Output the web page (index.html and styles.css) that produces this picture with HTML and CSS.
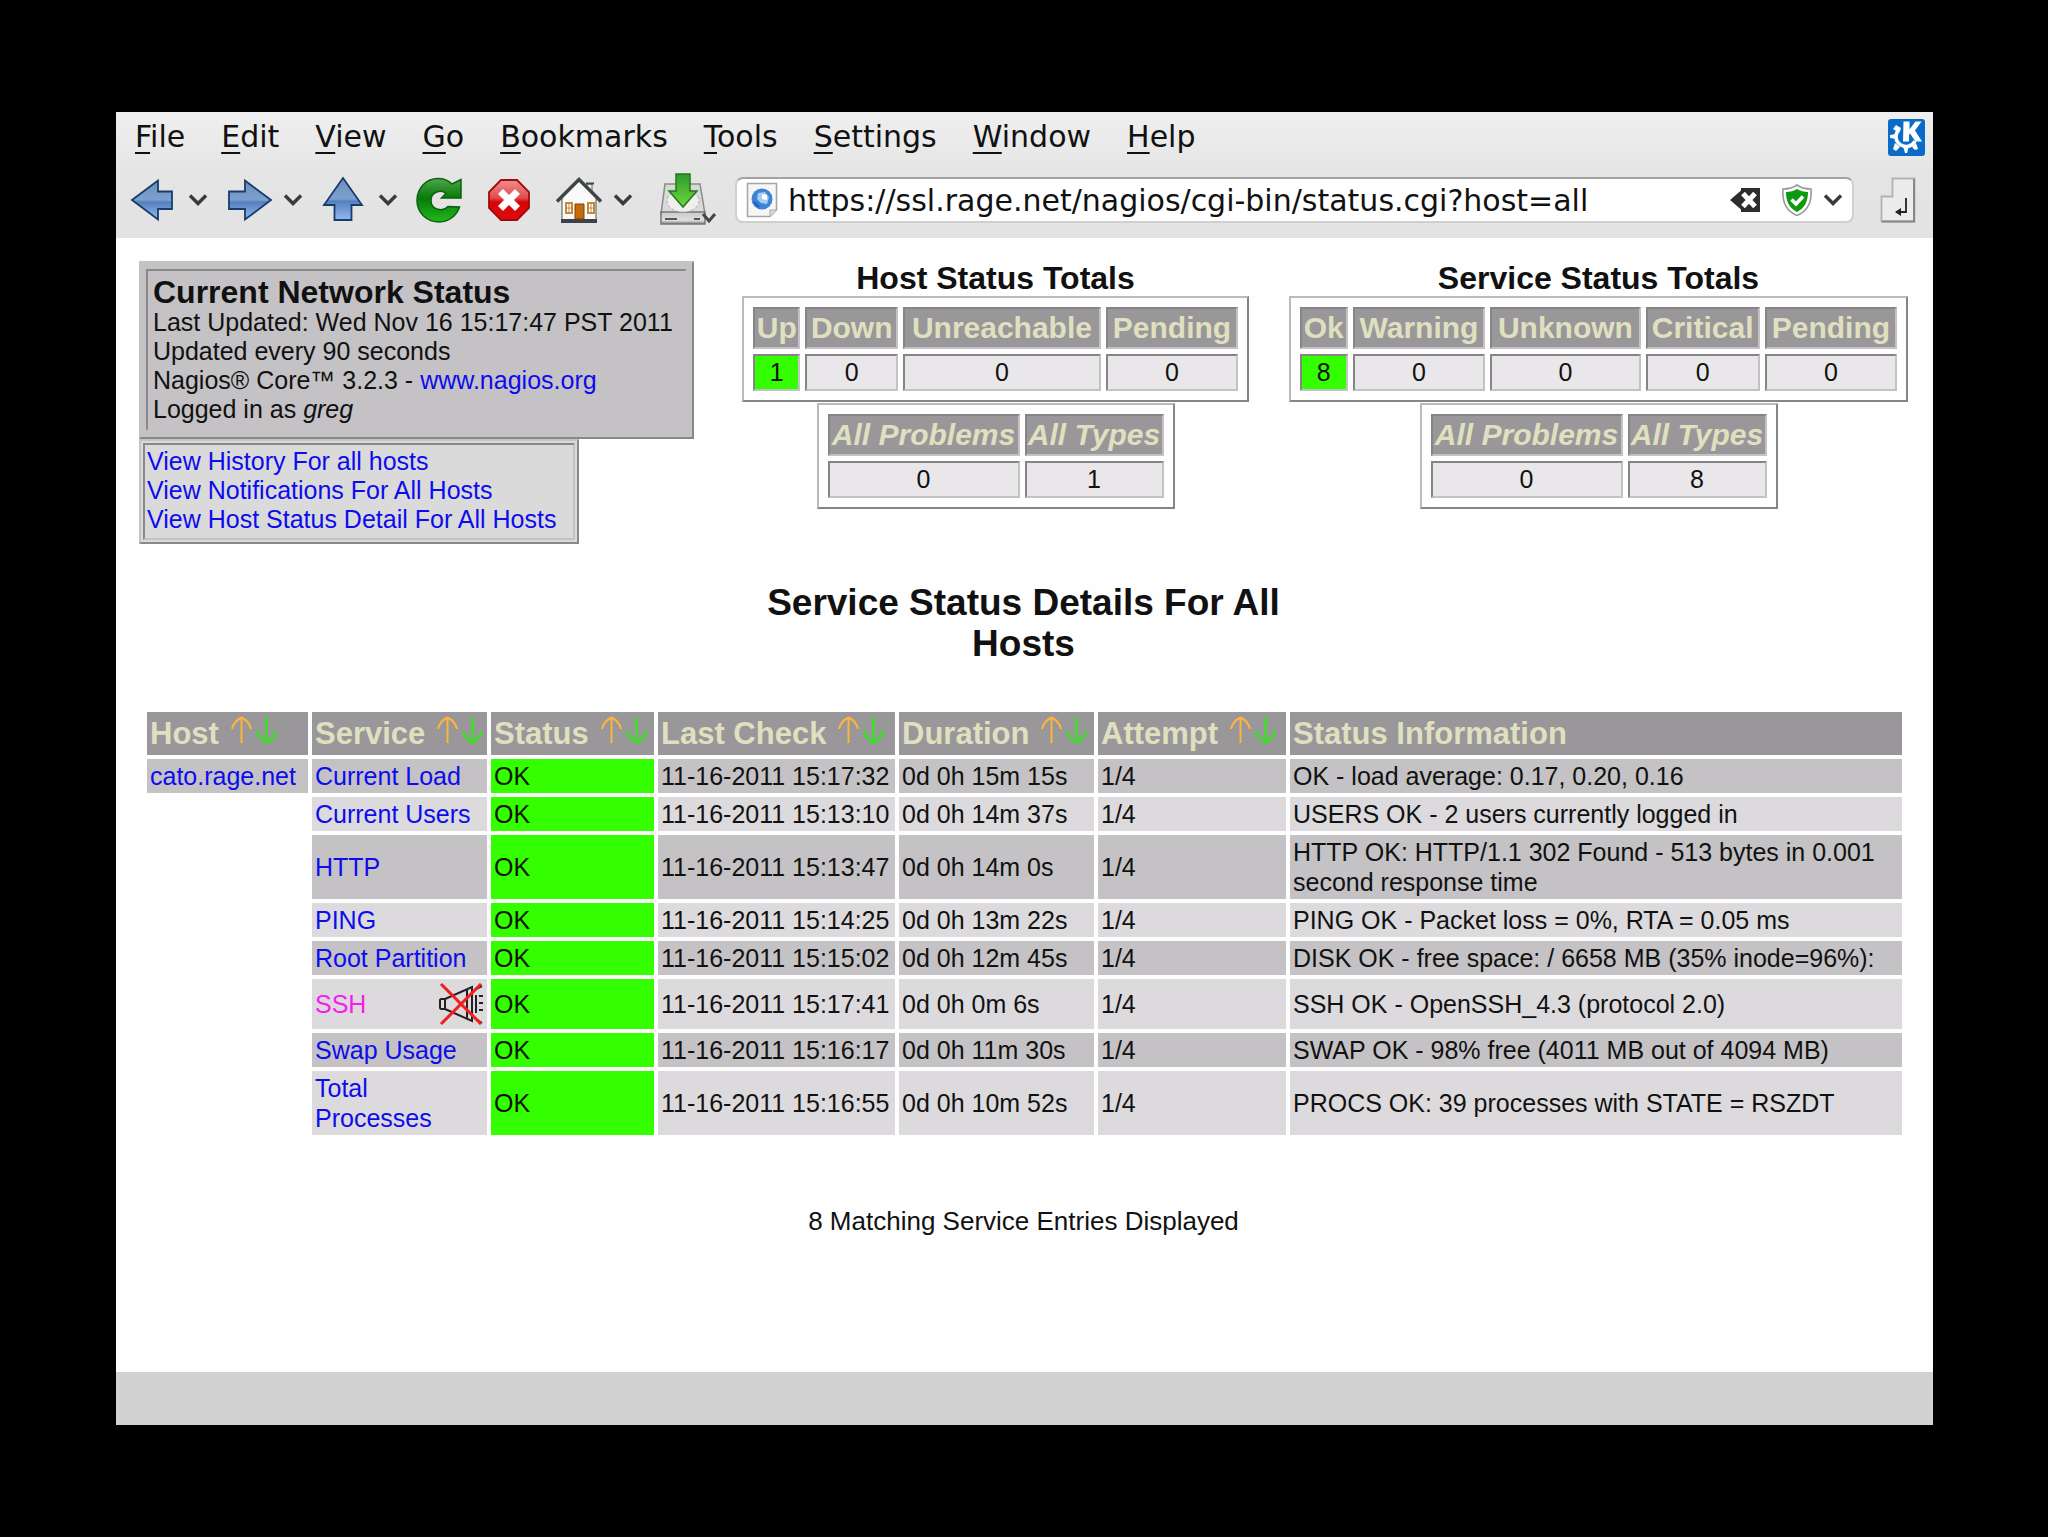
FILE: index.html
```html
<!DOCTYPE html>
<html lang="en">
<head>
<meta charset="utf-8">
<title>Current Network Status</title>
<link rel="stylesheet" href="styles.css">
</head>
<body>
<svg class="defs" width="0" height="0" aria-hidden="true">
  <defs>
    <linearGradient id="blue" x1="0" y1="0" x2="0" y2="1">
      <stop offset="0" stop-color="#6f8fb8"/><stop offset=".5" stop-color="#7ba0d0"/><stop offset=".55" stop-color="#5580be"/><stop offset="1" stop-color="#93b8f0"/>
    </linearGradient>
    <linearGradient id="green" x1="0" y1="0" x2="0" y2="1">
      <stop offset="0" stop-color="#4fa54c"/><stop offset=".45" stop-color="#087a0a"/><stop offset="1" stop-color="#22b81c"/>
    </linearGradient>
    <linearGradient id="red" x1="0" y1="0" x2="0" y2="1">
      <stop offset="0" stop-color="#ef8f90"/><stop offset=".45" stop-color="#e24a4c"/><stop offset=".55" stop-color="#d40608"/><stop offset="1" stop-color="#e00a0a"/>
    </linearGradient>
    <linearGradient id="lime" x1="0" y1="0" x2="0" y2="1">
      <stop offset="0" stop-color="#2f9a2c"/><stop offset="1" stop-color="#6fd83c"/>
    </linearGradient>
    <linearGradient id="metal" x1="0" y1="0" x2="0" y2="1">
      <stop offset="0" stop-color="#c9c9c9"/><stop offset=".7" stop-color="#dedede"/><stop offset="1" stop-color="#7c7c7c"/>
    </linearGradient>
    <symbol id="chevron" viewBox="0 0 20 14"><path d="M2 2.500 10 10.500 18 2.500" fill="none" stroke="#3a3a3a" stroke-width="3.400"/></symbol>
    <symbol id="sort" viewBox="0 0 46 28">
      <path d="M10.500 27V2M1 13Q3 5 10.500 1.500 18 5 20 13" fill="none" stroke="#ffb43c" stroke-width="2"/>
      <path d="M35.500 1v25M26 15q2 8 9.500 11.500Q43 23 45 15" fill="none" stroke="#33e81a" stroke-width="2.400"/>
    </symbol>
  </defs>
</svg>
<div class="window">
  <header class="chrome">
    <nav class="menubar" aria-label="Menu">
      <button type="button"><u>F</u>ile</button>
      <button type="button"><u>E</u>dit</button>
      <button type="button"><u>V</u>iew</button>
      <button type="button"><u>G</u>o</button>
      <button type="button"><u>B</u>ookmarks</button>
      <button type="button"><u>T</u>ools</button>
      <button type="button"><u>S</u>ettings</button>
      <button type="button"><u>W</u>indow</button>
      <button type="button"><u>H</u>elp</button>
      <svg class="kde" viewBox="0 0 37 37" aria-hidden="true">
        <rect width="37" height="37" rx="3" fill="#0b6bc9"/>
        <path d="M11.500 10A10 10 0 1 0 27 22" fill="none" stroke="#fff" stroke-width="3.500"/>
        <path d="M5 10l3-4 5 3-2 5zM2 16l6-1v5l-6-1zM5 30l2-6 5 4-4 4zM15 27h6l-2 7h-2zM24 28l4-4 2 6-3 1z" fill="#fff"/>
        <path d="M15.500 2.500h6v8l6-8h6l-6.500 9 7 11h-6.500l-5.500-8-1 1.500v6.500h-6z" fill="#fff"/>
      </svg>
    </nav>
    <div class="toolbar">
      <button type="button" class="tool" aria-label="Back">
        <svg class="icon" viewBox="0 0 48 48"><path d="M2 24 28 4.500V15.500H42V33H28V43.500z" fill="url(#blue)" stroke="#173c6b" stroke-width="1.800"/></svg>
        <svg class="chevron"><use href="#chevron"/></svg>
      </button>
      <button type="button" class="tool" aria-label="Forward">
        <svg class="icon" viewBox="0 0 48 48"><path d="M46 24 20 4.500V15.500H4V33H20V43.500z" fill="url(#blue)" stroke="#173c6b" stroke-width="1.800"/></svg>
        <svg class="chevron"><use href="#chevron"/></svg>
      </button>
      <button type="button" class="tool" aria-label="Up">
        <svg class="icon" viewBox="0 0 48 48"><path d="M23 2 42 29H31.500V44H14.500V29H4z" fill="url(#blue)" stroke="#173c6b" stroke-width="1.800"/></svg>
        <svg class="chevron"><use href="#chevron"/></svg>
      </button>
      <button type="button" class="tool single" aria-label="Reload">
        <svg class="icon" viewBox="0 0 48 48"><path d="M37 8 46 3.500V22H26.500L31 17.500C27 13.500 15.500 15 16 25 16.500 34 28 36 33 30.500L44.500 31C42 39 34 46 24.500 46 12 46 2 37 2 24.500 2 11 12 2.500 23 2.500 29 2.500 34 5 37 8z" fill="url(#green)" stroke="#0b610c" stroke-width="1.500"/></svg>
      </button>
      <button type="button" class="tool single" aria-label="Stop">
        <svg class="icon" viewBox="0 0 48 48"><path d="M16 4H32L44 16V32L32 44H16L4 32V16z" fill="url(#red)" stroke="#9d0b0c" stroke-width="1.800"/><path d="M15.500 15.500 32.500 32.500M32.500 15.500 15.500 32.500" stroke="#fff" stroke-width="7"/></svg>
      </button>
      <button type="button" class="tool" aria-label="Home">
        <svg class="icon" viewBox="0 0 48 48"><path d="M32 8h5v10l-5-5z" fill="#eee" stroke="#666"/><path d="M31 7.500h8" stroke="#444" stroke-width="2"/><path d="M7 22 24 5 41 22V46H7z" fill="#fafafa" stroke="#555"/><path d="M6 43h36v4H6z" fill="#3c4247"/><path d="M2 25.500 24 3.500 46 25.500" fill="none" stroke="#3f4448" stroke-width="3.500"/><path d="M20 28h9v15h-9z" fill="#c66a0a" stroke="#7d4205"/><path d="M11 27h6v10h-6zM33 27h6v10h-6z" fill="#fff" stroke="#c08a3a" stroke-width="2"/><path d="M11 32h6M33 32h6M14 27v10M36 27v10" stroke="#c08a3a"/></svg>
        <svg class="chevron"><use href="#chevron"/></svg>
      </button>
      <button type="button" class="tool download" aria-label="Download">
        <svg class="icon-wide" viewBox="0 0 60 56"><path d="M7 12H42L47 42H3z" fill="#d9d9d9" stroke="#8a8a8a" stroke-width="1.500"/><path d="M3 40H47V52H3z" fill="url(#metal)" stroke="#777" stroke-width="1.500"/><ellipse cx="25" cy="29" rx="16" ry="11" fill="#efefef" stroke="#aaa" stroke-dasharray="3 2"/><path d="M7 47h12M36 47h6" stroke="#555" stroke-width="2"/><path d="M18 2H32V19H39L25 35 11 19H18z" fill="url(#lime)" stroke="#227a1d" stroke-width="1.500"/><path d="M45 42l6 7 6-7" fill="none" stroke="#444" stroke-width="3"/></svg>
      </button>
      <div class="location">
        <svg class="favicon" viewBox="0 0 32 36"><path d="M1.500 1.500H30.500V28L24 34.500H1.500z" fill="#f6f6f6" stroke="#a5a5a5" stroke-width="1.500"/><path d="M24 34.500V28h6.500" fill="#ddd" stroke="#a5a5a5"/><circle cx="16" cy="17" r="10.500" fill="#3f83d6"/><path d="M12 11l7-1 4 5-2 7-6-1-4-4z" fill="#a6cdf5"/><path d="M16 12l5 1v5l-5-1z" fill="#fff"/><path d="M8 20l5 5" stroke="#205fae" stroke-width="2"/></svg>
        <input type="text" aria-label="Location" value="https://ssl.rage.net/nagios/cgi-bin/status.cgi?host=all">
        <svg class="clear" viewBox="0 0 32 26"><path d="M1 13 12 3.500V1H31V25H12V22.500z" fill="#2c2e30"/><path d="M14 6.500 26 19.500M26 6.500 14 19.500" stroke="#fff" stroke-width="5"/></svg>
        <svg class="shield" viewBox="0 0 32 32"><path d="M16 1C20 4 25 5 30 5 31 17 27 27 16 31.500 5 27 1 17 2 5 7 5 12 4 16 1z" fill="#fff" stroke="#999" stroke-width="1.600"/><path d="M16 5C19 7 23 8 27 8 27 17 24 24 16 28 8 24 5 17 5 8 9 8 13 7 16 5z" fill="#0c9a10"/><path d="M10.500 15.500 15 20 22 12.500" fill="none" stroke="#fff" stroke-width="3.600"/></svg>
        <svg class="chevron"><use href="#chevron"/></svg>
      </div>
      <button type="button" class="tool go" aria-label="Go to location">
        <svg viewBox="0 0 36 46"><path d="M12.500 1.500H34.500V44.500H1.500V19.500H12.500z" fill="#ececec" stroke="#b2b2b2" stroke-width="1.800"/><path d="M34 2V44.500H2" fill="none" stroke="#888" stroke-width="2"/><path d="M26 21V35H16" fill="none" stroke="#222" stroke-width="1.800"/><path d="M15 35l6-4v8z" fill="#222"/></svg>
      </button>
    </div>
  </header>

  <main class="page">
    <section class="overview">
      <div class="info">
        <div class="panel status-panel">
          <div class="panel-body">
            <h2>Current Network Status</h2>
            <p>Last Updated: Wed Nov 16 15:17:47 PST 2011</p>
            <p>Updated every 90 seconds</p>
            <p>Nagios® Core™ 3.2.3 - <a href="#nagios">www.nagios.org</a></p>
            <p>Logged in as <i>greg</i></p>
          </div>
        </div>
        <div class="panel links-panel">
          <div class="panel-body">
            <a href="#history">View History For all hosts</a>
            <a href="#notifications">View Notifications For All Hosts</a>
            <a href="#hosts">View Host Status Detail For All Hosts</a>
          </div>
        </div>
      </div>

      <div class="totals">
        <h2>Host Status Totals</h2>
        <table class="count host-count">
          <tr><th>Up</th><th>Down</th><th>Unreachable</th><th>Pending</th></tr>
          <tr><td class="ok">1</td><td>0</td><td>0</td><td>0</td></tr>
        </table>
        <table class="count sum-count">
          <tr><th>All Problems</th><th>All Types</th></tr>
          <tr><td>0</td><td>1</td></tr>
        </table>
      </div>

      <div class="totals">
        <h2>Service Status Totals</h2>
        <table class="count service-count">
          <tr><th>Ok</th><th>Warning</th><th>Unknown</th><th>Critical</th><th>Pending</th></tr>
          <tr><td class="ok">8</td><td>0</td><td>0</td><td>0</td><td>0</td></tr>
        </table>
        <table class="count sum-count">
          <tr><th>All Problems</th><th>All Types</th></tr>
          <tr><td>0</td><td>8</td></tr>
        </table>
      </div>
    </section>

    <h1>Service Status Details For All Hosts</h1>

    <table class="details">
      <colgroup><col class="c-host"><col class="c-service"><col class="c-status"><col class="c-check"><col class="c-duration"><col class="c-attempt"><col></colgroup>
      <thead>
        <tr>
          <th>Host<svg class="sort"><use href="#sort"/></svg></th>
          <th>Service<svg class="sort"><use href="#sort"/></svg></th>
          <th>Status<svg class="sort"><use href="#sort"/></svg></th>
          <th>Last Check<svg class="sort"><use href="#sort"/></svg></th>
          <th>Duration<svg class="sort"><use href="#sort"/></svg></th>
          <th>Attempt<svg class="sort"><use href="#sort"/></svg></th>
          <th>Status Information</th>
        </tr>
      </thead>
      <tbody>
        <tr><td><a href="#cato">cato.rage.net</a></td><td><a href="#load">Current Load</a></td><td class="ok">OK</td><td>11-16-2011 15:17:32</td><td>0d 0h 15m 15s</td><td>1/4</td><td>OK - load average: 0.17, 0.20, 0.16</td></tr>
        <tr><td class="blank"></td><td><a href="#users">Current Users</a></td><td class="ok">OK</td><td>11-16-2011 15:13:10</td><td>0d 0h 14m 37s</td><td>1/4</td><td>USERS OK - 2 users currently logged in</td></tr>
        <tr><td class="blank"></td><td><a href="#http">HTTP</a></td><td class="ok">OK</td><td>11-16-2011 15:13:47</td><td>0d 0h 14m 0s</td><td>1/4</td><td>HTTP OK: HTTP/1.1 302 Found - 513 bytes in 0.001 second response time</td></tr>
        <tr><td class="blank"></td><td><a href="#ping">PING</a></td><td class="ok">OK</td><td>11-16-2011 15:14:25</td><td>0d 0h 13m 22s</td><td>1/4</td><td>PING OK - Packet loss = 0%, RTA = 0.05 ms</td></tr>
        <tr><td class="blank"></td><td><a href="#root">Root Partition</a></td><td class="ok">OK</td><td>11-16-2011 15:15:02</td><td>0d 0h 12m 45s</td><td>1/4</td><td>DISK OK - free space: / 6658 MB (35% inode=96%):</td></tr>
        <tr><td class="blank"></td><td><div class="muted"><a class="visited" href="#ssh">SSH</a><svg viewBox="0 0 46 42" aria-label="Notifications disabled"><path d="M3 16h4v10H3a1.500 1.500 0 0 1-1-1v-8zM7 16 34 4V38L7 26M29 7v28M38 12v18" fill="none" stroke="#222" stroke-width="2"/><path d="M38 6l6-3M41 13h4M41 20h4M41 27h4M38 36l6 4" stroke="#222" stroke-width="2"/><path d="M3 1 43 41M43 1 3 41" stroke="#f51d1d" stroke-width="3"/></svg></div></td><td class="ok">OK</td><td>11-16-2011 15:17:41</td><td>0d 0h 0m 6s</td><td>1/4</td><td>SSH OK - OpenSSH_4.3 (protocol 2.0)</td></tr>
        <tr><td class="blank"></td><td><a href="#swap">Swap Usage</a></td><td class="ok">OK</td><td>11-16-2011 15:16:17</td><td>0d 0h 11m 30s</td><td>1/4</td><td>SWAP OK - 98% free (4011 MB out of 4094 MB)</td></tr>
        <tr><td class="blank"></td><td><a href="#procs">Total Processes</a></td><td class="ok">OK</td><td>11-16-2011 15:16:55</td><td>0d 0h 10m 52s</td><td>1/4</td><td>PROCS OK: 39 processes with STATE = RSZDT</td></tr>
      </tbody>
    </table>

    <p class="matches">8 Matching Service Entries Displayed</p>
  </main>
  <footer class="statusbar"></footer>
</div>
</body>
</html>
```
FILE: styles.css
```css
* { box-sizing: border-box; }

body {
  margin: 0;
  min-height: 100vh;
  padding: 112px 115px 112px 116px;
  display: flex;
  flex-direction: column;
  background: #000;
  color: #111;
  font: 25px/30px "Liberation Sans", Arial, sans-serif;
}

h1, h2, p { margin: 0; }
a { color: #0c0cec; text-decoration: none; }
button { border: 0; padding: 0; background: none; color: inherit; font: inherit; }
svg { display: block; flex: none; }
.defs { position: absolute; }

.window {
  flex: 1;
  display: flex;
  flex-direction: column;
  background: #fefefe;
}

/* Browser chrome */
.chrome {
  background: linear-gradient(#efefef, #e5e5e5 50%, #e4e2e2);
  font-family: "DejaVu Sans", sans-serif;
  font-size: 30px;
}

.menubar {
  display: flex;
  align-items: center;
  gap: 36px;
  height: 50px;
  padding: 0 8px 0 19px;
}
.menubar u {
  text-decoration-thickness: 2px;
  text-underline-offset: 5px;
  text-decoration-skip-ink: none;
}
.kde { width: 37px; height: 37px; margin-left: auto; }

.toolbar {
  display: flex;
  align-items: center;
  gap: 17px;
  height: 76px;
  padding: 0 17px 0 14px;
}
.tool { display: flex; align-items: center; gap: 10px; }
.single { margin-right: 5px; }
.download { margin-left: 8px; }
.icon { width: 48px; height: 48px; }
.icon-wide { width: 60px; height: 56px; }
.chevron { width: 20px; height: 14px; }
.go svg { width: 36px; height: 46px; }

.location {
  flex: 1;
  display: flex;
  align-items: center;
  gap: 10px;
  height: 46px;
  margin-right: 9px;
  padding: 0 9px;
  background: #fff;
  border: 2px solid #cfcfcf;
  border-top-color: #a3a3a3;
  border-radius: 8px;
}
.location input {
  flex: 1;
  min-width: 0;
  padding: 0;
  border: 0;
  outline: 0;
  background: none;
  color: #111;
  font: inherit;
}
.favicon { width: 32px; height: 36px; }
.clear { width: 32px; height: 26px; margin-right: 10px; }
.shield { width: 32px; height: 32px; }

/* Page */
.page { flex: 1; padding: 23px 25px 0 23px; }

.overview {
  display: flex;
  justify-content: space-between;
  align-items: flex-start;
}
h2 { font-size: 32px; line-height: 34px; }

.info {
  display: flex;
  flex-direction: column;
  align-items: flex-start;
  margin-right: 8px;
  line-height: 29px;
}
.panel { border: 2px solid; }
.panel-body { border: 2px solid; }
.status-panel {
  width: 555px;
  padding: 6px 5px;
  background: #c4c2c4;
  border-color: #c4c2c4 #8a888a #8a888a #c4c2c4;
}
.status-panel .panel-body {
  padding: 5px;
  border-color: #8a888a #c4c2c4 #c4c2c4 #8a888a;
}
.status-panel h2 { line-height: 32px; }
.links-panel {
  width: 440px;
  padding: 2px;
  background: #dbdadb;
  border-color: #c4c2c4 #8a888a #8a888a #c4c2c4;
}
.links-panel .panel-body {
  display: flex;
  flex-direction: column;
  padding: 2px 2px 4px;
  border-color: #8a888a #c4c2c4 #c4c2c4 #8a888a;
}
.links-panel a { white-space: nowrap; }

.totals { display: flex; flex-direction: column; align-items: center; gap: 1px; }

.count {
  padding: 4px;
  border: 2px solid;
  border-color: #bcbabc #868486 #868486 #bcbabc;
  border-spacing: 5px;
  text-align: center;
}
.count th, .count td { border: 2px solid; border-color: #868486 #c4c2c4 #c4c2c4 #868486; }
.count th { padding: 2px 0; background: #999799; color: #dfe0c0; font-size: 30px; line-height: 34px; }
.count td { padding: 2px 0; background: #e9e7e9; line-height: 29px; }
.host-count { width: 507px; }
.host-count th:nth-child(3) { width: 198px; }
.service-count { width: 619px; }
.sum-count { width: 358px; }
.sum-count th { font-style: italic; }
.sum-count th:first-child { width: 192px; }
.count .ok { background: #33ff00; }

h1 {
  max-width: 590px;
  margin: 38px auto 44px;
  font-size: 37px;
  line-height: 41px;
  text-align: center;
}

.details {
  width: calc(100% - 6px);
  margin-left: 4px;
  border-spacing: 4px;
  table-layout: fixed;
}
.details th, .details td { padding: 2px 3px; text-align: left; background: #c4c2c4; }
.details th {
  height: 43px;
  padding: 0 3px;
  background: #999799;
  color: #dfe0c0;
  font-size: 31px;
  line-height: 34px;
  white-space: nowrap;
}
.details tr:nth-child(even) td { background: #dcdadc; }
.details tbody tr .ok { background: #33ff00; }
.details tbody tr .blank { background: none; }
.sort { display: inline-block; width: 46px; height: 28px; margin-left: 12px; }
.c-host { width: 161px; }
.c-service { width: 175px; }
.c-status { width: 163px; }
.c-check { width: 237px; }
.c-duration { width: 195px; }
.c-attempt { width: 188px; }

.muted { display: flex; align-items: center; justify-content: space-between; height: 46px; }
.muted svg { width: 46px; height: 42px; }
.visited { color: #f71df0; }

.matches { margin-top: 67px; font-size: 26px; text-align: center; }

.statusbar { height: 53px; background: #d2d2d2; }
```
